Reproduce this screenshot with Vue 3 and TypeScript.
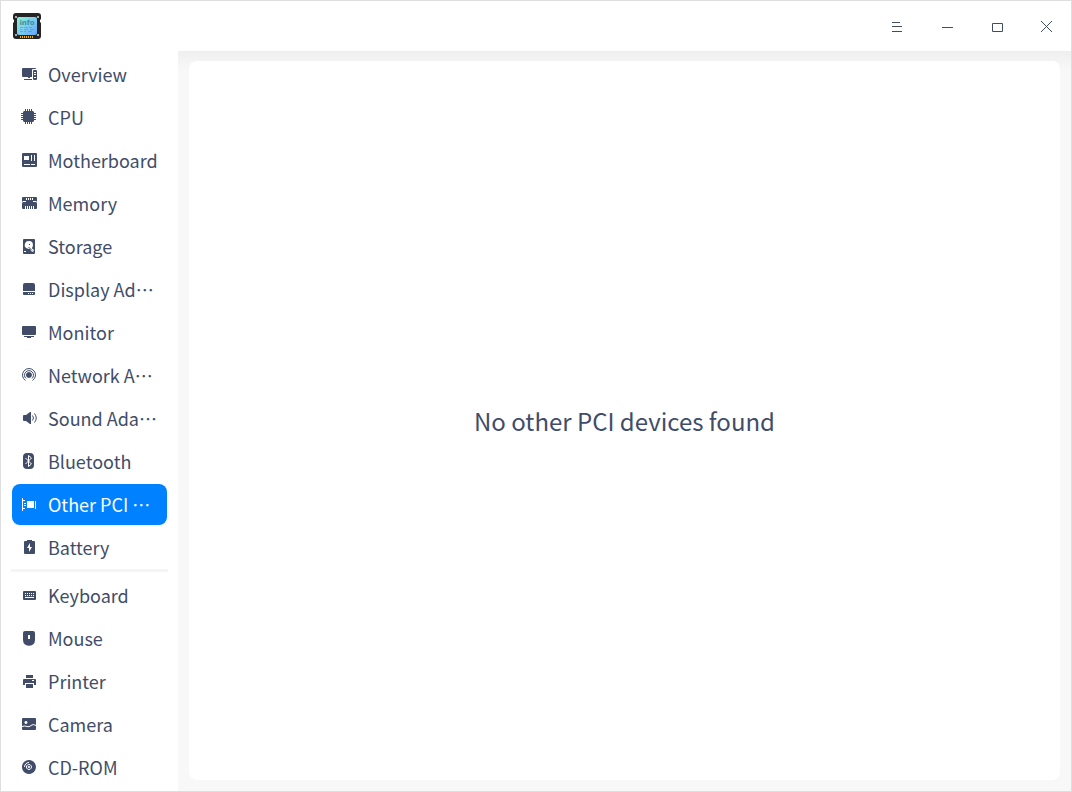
<script setup lang="ts">
import { ref } from 'vue'

interface Glyph {
  fill?: string
  line?: string
  hole?: string
  cut?: string
}

interface Device {
  name: string
  glyph: Glyph
}

const groups: Device[][] = [
  [
    {
      name: 'Overview',
      glyph: {
        fill: 'M2 2H14Q15 2 15 3H12Q11 3 11 4V11H2Q1 11 1 10V3Q1 2 2 2ZM7 11H9V12H7ZM3 13H11V14H3ZM13 4H15Q16 4 16 5V13Q16 14 15 14H13Q12 14 12 13V5Q12 4 13 4Z',
        hole: 'M13 6H15V7H13ZM13 8H15V9H13ZM13 11H15V12H13Z',
      },
    },
    {
      name: 'CPU',
      glyph: {
        fill: 'M3 2H12L13 3V12L12 13H3L2 12V3ZM4 0H5V2H4ZM6 0H7V2H6ZM8 0H9V2H8ZM10 0H11V2H10ZM4 13H5V15H4ZM6 13H7V15H6ZM8 13H9V15H8ZM10 13H11V15H10ZM0 4H2V5H0ZM0 6H2V7H0ZM0 8H2V9H0ZM0 10H2V11H0ZM13 4H15V5H13ZM13 6H15V7H13ZM13 8H15V9H13ZM13 10H15V11H13Z',
      },
    },
    {
      name: 'Motherboard',
      glyph: {
        fill: 'M2 1H15Q16 1 16 2V14Q16 15 15 15H2Q1 15 1 14V2Q1 1 2 1Z',
        hole: 'M3 4H8V8H3ZM10 3H11V9H10ZM13 3H14V9H13ZM3 12H9V13H3ZM10 12H14V13H10Z',
      },
    },
    {
      name: 'Memory',
      glyph: {
        fill: 'M2 2H15Q16 2 16 3V6L15 7L16 8V13Q16 14 15 14H2Q1 14 1 13V8L2 7L1 6V3Q1 2 2 2Z',
        hole: 'M5 3H6V5H5ZM7 3H8V5H7ZM9 3H10V5H9ZM11 3H12V5H11ZM2 6H5V7H2ZM12 6H15V7H12ZM4 11H5V14H4ZM6 11H7V14H6ZM8 11H9V14H8ZM10 11H11V14H10ZM12 11H13V14H12Z',
      },
    },
    {
      name: 'Storage',
      glyph: {
        fill: 'M3 1H13Q14 1 14 2V15Q14 16 13 16H3Q2 16 2 15V2Q2 1 3 1Z',
        hole: 'M8 3A4 4 0 1 1 7.9 11L5 10A4 4 0 0 1 8 3ZM3 13H5V14H3ZM8 8L13 12L12 14L10 13Z',
        line: 'M8 6.5H9M7.5 9L11 12.5',
      },
    },
    {
      name: 'Display Ad…',
      glyph: {
        fill: 'M4 2H12Q14 2 14 4V10H2V4Q2 2 4 2ZM2 11H14V13Q14 14 13 14H3Q2 14 2 13Z',
        hole: 'M7 12H8V13H7ZM9 12H10V13H9ZM11 12H12V13H11Z',
      },
    },
    {
      name: 'Monitor',
      glyph: {
        fill: 'M2 2H14Q15 2 15 3V10Q15 11 14 11H2Q1 11 1 10V3Q1 2 2 2ZM3 12H13V13H3ZM6 13H10V14H6Z',
      },
    },
    {
      name: 'Network A…',
      glyph: {
        fill: 'M8 5A3 3 0 1 1 7.9 5Z',
        line: 'M4.5 13.5A6.5 6.5 0 1 1 11.5 13.5M5 11.5A4.5 4.5 0 1 1 11 11.5',
      },
    },
    {
      name: 'Sound Ada…',
      glyph: {
        fill: 'M3 5H5L9 2H10V14H9L5 11H3Q2 11 2 10V6Q2 5 3 5Z',
        line: 'M11.5 5.5Q13.5 8 11.5 10.5M13.5 3.5Q17 8 13.5 12.5',
      },
    },
    {
      name: 'Bluetooth',
      glyph: {
        fill: 'M6 0H9Q13 0 13 4V12Q13 16 9 16H6Q2 16 2 12V4Q2 0 6 0Z',
        cut: 'M4.5 5L10.5 11L7.5 13.5V2.5L10.5 5L4.5 11',
      },
    },
    {
      name: 'Other PCI …',
      glyph: {
        fill: 'M1 2H2V15H1ZM2 4H4V5H2ZM3 7H5V8H3ZM3 9H5V10H3ZM2 12H4V13H2ZM6 5H13V12H6ZM14 5H15V13H14Z',
      },
    },
    {
      name: 'Battery',
      glyph: {
        fill: 'M6 1H11V2H13Q14 2 14 3V14Q14 15 13 15H4Q3 15 3 14V3Q3 2 4 2H6Z',
        hole: 'M9 4L6 9H8V13L11 8H9Z',
      },
    },
  ],
  [
    {
      name: 'Keyboard',
      glyph: {
        fill: 'M3 4H14Q15 4 15 5V12Q15 13 14 13H3Q2 13 2 12V5Q2 4 3 4Z',
        hole: 'M4 6H5V7H4ZM6 6H7V7H6ZM8 6H9V7H8ZM10 6H11V7H10ZM12 6H13V7H12ZM4 8H5V9H4ZM6 8H7V9H6ZM8 8H9V9H8ZM10 8H11V9H10ZM12 8H13V9H12ZM4 10H13V11H4Z',
      },
    },
    {
      name: 'Mouse',
      glyph: {
        fill: 'M4 1H12Q14 1 14 3V10Q14 13 12 14.5Q8 17 4 14.5Q2 13 2 10V3Q2 1 4 1Z',
        hole: 'M7 5H9V9H7Z',
      },
    },
    {
      name: 'Printer',
      glyph: {
        fill: 'M5 2H12V5H5ZM3 6H14Q15 6 15 7V12H13V10H4V12H2V7Q2 6 3 6ZM5 11H12V15H5Z',
        hole: 'M11 7H13V8H11Z',
      },
    },
    {
      name: 'Camera',
      glyph: {
        fill: 'M2 2H14Q15 2 15 3V13Q15 14 14 14H2Q1 14 1 13V3Q1 2 2 2Z',
        hole: 'M5 5A1.5 1.5 0 1 1 4.9 5Z',
        cut: 'M1 10.5Q4 9.5 6 10.5T10 9.5T15 9.5',
      },
    },
    {
      name: 'CD-ROM',
      glyph: {
        fill: 'M8 1A7 7 0 1 1 7.9 1Z',
        cut: 'M8 5.5A2.5 2.5 0 1 1 7.9 5.5M3.5 8A4.5 4.5 0 0 1 8 3.5',
        hole: 'M8 7A1 1 0 1 1 7.9 7Z',
      },
    },
  ],
]

const current = ref('Other PCI …')
</script>

<template>
  <div class="window">
    <header class="titlebar">
      <svg class="logo" viewBox="0 0 30 28" aria-hidden="true">
        <defs>
          <linearGradient id="screen" x1="0" y1="0" x2="1" y2="1">
            <stop offset="0" stop-color="#8af5cf" />
            <stop offset="0.5" stop-color="#7bcdf0" />
            <stop offset="1" stop-color="#65a5ff" />
          </linearGradient>
        </defs>
        <path d="M4 1H26Q29 1 29 4V7L28 8V10L29 11V24Q29 27 26 27H4Q1 27 1 24V11L2 10V8L1 7V4Q1 1 4 1Z" fill="#242426" />
        <path d="M3 4H5V6H3ZM25 4H27V6H25ZM3 22H5V24H3ZM25 22H27V24H25Z" fill="#aaa" />
        <rect x="5" y="5" width="20" height="18" rx="2" fill="url(#screen)" />
        <path d="M8 24H9V26H8ZM10 24H11V26H10ZM12 24H13V26H12ZM14 24H15V26H14ZM16 24H17V26H16ZM18 24H19V26H18ZM20 24H21V26H20Z" fill="#f4b21b" />
        <text x="15" y="13" text-anchor="middle" class="logo-text">info</text>
        <path d="M8 15.5H11M12 15.5H16M17 15.5H20M8 17.5H10M12 17.5H16M18 17.5H22M8 19.5H11M12 19.5H14M16 19.5H20" stroke="#438cae" stroke-opacity="0.5" />
      </svg>
      <div class="controls">
        <button type="button" aria-label="Menu">
          <svg viewBox="0 0 12 12"><path d="M1 1.5H9M1 5.5H11M1 10.5H11" /></svg>
        </button>
        <button type="button" aria-label="Minimize">
          <svg viewBox="0 0 12 12"><path d="M1 6.5H12" /></svg>
        </button>
        <button type="button" aria-label="Maximize">
          <svg viewBox="0 0 12 12"><path d="M1.5 2.5H11.5V10.5H1.5Z" /></svg>
        </button>
        <button type="button" aria-label="Close">
          <svg viewBox="0 0 12 12"><path d="M0 0L11 11M11 0L0 11" /></svg>
        </button>
      </div>
    </header>

    <div class="body">
      <nav class="sidebar" aria-label="Devices">
        <ul v-for="(group, index) in groups" :key="index" class="group">
          <li v-for="device in group" :key="device.name">
            <button
              type="button"
              class="device"
              :class="{ active: device.name === current }"
              @click="current = device.name"
            >
              <svg class="icon" viewBox="0 0 16 16" aria-hidden="true">
                <path v-if="device.glyph.fill" class="fill" :d="device.glyph.fill" />
                <path v-if="device.glyph.hole" class="hole" :d="device.glyph.hole" />
                <path v-if="device.glyph.line" class="line" :d="device.glyph.line" />
                <path v-if="device.glyph.cut" class="cut" :d="device.glyph.cut" />
              </svg>
              <span class="label" lang="zh-CN">{{ device.name }}</span>
            </button>
          </li>
        </ul>
      </nav>
      <main class="content">
        <section class="panel">
          <p class="message">No other PCI devices found</p>
        </section>
      </main>
    </div>
  </div>
</template>

<style>
body {
  margin: 0;
}
</style>

<style scoped>
.window {
  box-sizing: border-box;
  display: flex;
  flex-direction: column;
  min-height: 100vh;
  border: 1px solid #dedede;
  background: #fff;
  color: #414d68;
  font-family: "Noto Sans CJK SC", sans-serif;
}

.titlebar {
  display: flex;
  align-items: center;
  justify-content: space-between;
  height: 50px;
  padding-left: 11px;
}

.logo {
  width: 30px;
  height: 28px;
}

.logo-text {
  font: bold 7px "DejaVu Sans", sans-serif;
  fill: #438c9e;
}

.controls {
  display: flex;
}

.controls button {
  display: flex;
  align-items: center;
  justify-content: center;
  width: 50px;
  height: 50px;
  padding: 2px 0 0 2px;
  border: 0;
  background: none;
  color: inherit;
}

.controls svg {
  width: 12px;
  height: 12px;
  fill: none;
  stroke: currentColor;
}

.body {
  display: flex;
  flex: 1;
}

.sidebar {
  flex: none;
  width: 157px;
  padding: 3px 10px 2px;
}

.group {
  display: flex;
  flex-direction: column;
  gap: 2px;
  margin: 0;
  padding: 0;
  list-style: none;
}

.group + .group {
  margin-top: 1px;
  padding-top: 3px;
  border-top: 3px solid #f5f5f5;
}

.group li {
  padding: 0 1px;
}

.device {
  --back: #fff;
  display: flex;
  align-items: center;
  gap: 11px;
  width: 100%;
  height: 41px;
  padding: 0 9px 2px;
  border: 0;
  border-radius: 8px;
  background: var(--back);
  color: #414d68;
  font: 400 18px/28px "Noto Sans CJK SC", sans-serif;
  text-align: left;
  white-space: nowrap;
}

.device.active {
  --back: #0081ff;
  color: #fff;
}

.icon {
  flex: none;
  width: 16px;
  height: 16px;
}

.fill {
  fill: currentColor;
}

.hole {
  fill: var(--back);
}

.line {
  fill: none;
  stroke: currentColor;
}

.cut {
  fill: none;
  stroke: var(--back);
}

.content {
  display: flex;
  flex: 1;
  padding: 10px 11px 11px;
  background: linear-gradient(#efefef, #f8f8f8 20px);
}

.panel {
  display: flex;
  flex: 1;
  align-items: center;
  justify-content: center;
  border-radius: 8px;
  background: #fff;
}

.message {
  margin: 0;
  font-size: 24px;
  line-height: 36px;
}
</style>
